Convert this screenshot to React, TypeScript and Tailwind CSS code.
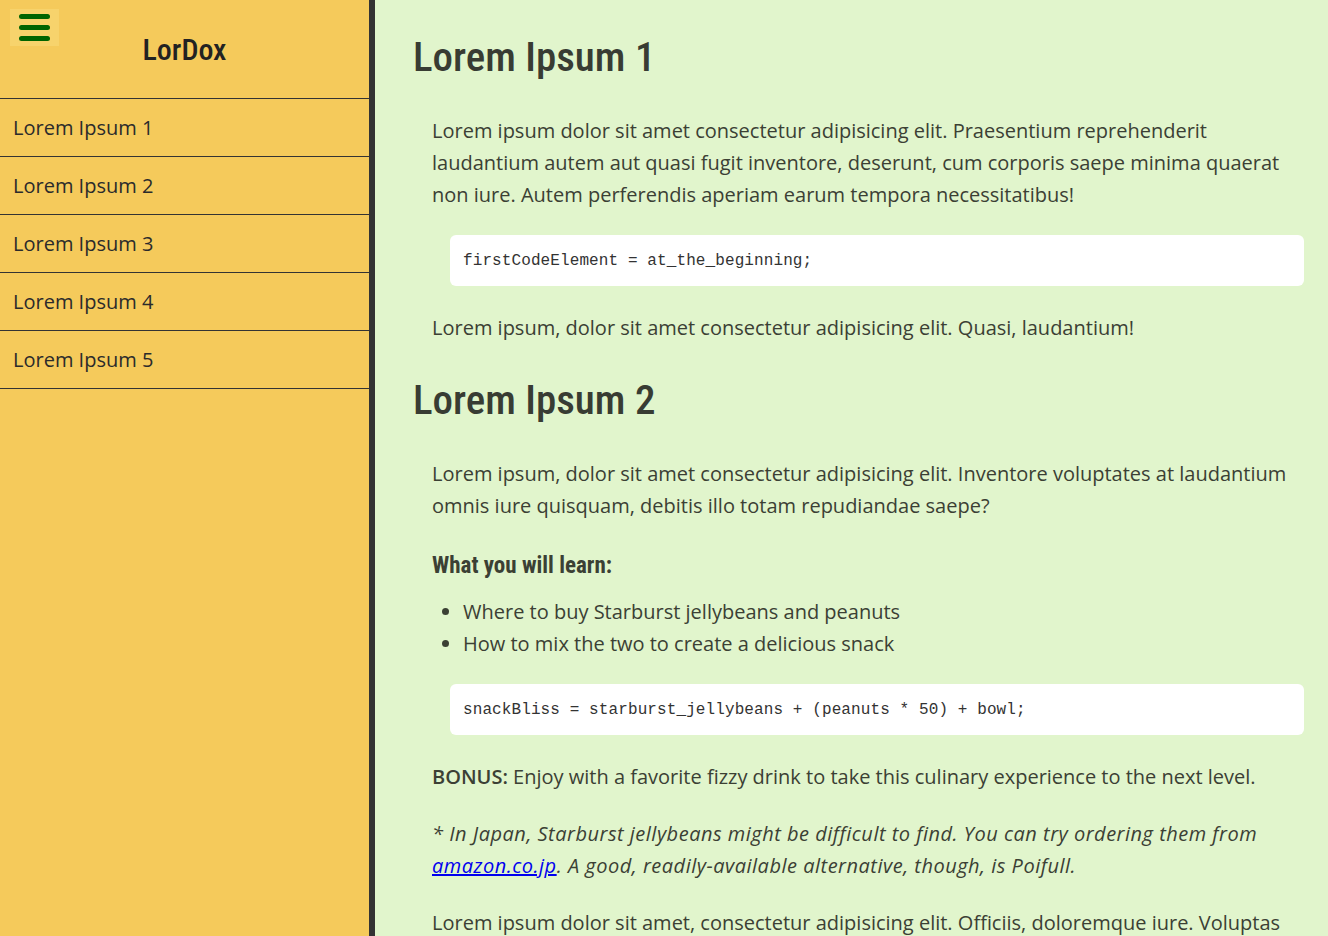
import type { JSX } from "react";

const navItems = ["Lorem Ipsum 1", "Lorem Ipsum 2", "Lorem Ipsum 3", "Lorem Ipsum 4", "Lorem Ipsum 5"];

const heading = "[font-family:'Roboto_Condensed',Roboto,sans-serif]";
const body = "[font-family:'Open_Sans',sans-serif]";

const CodeBlock = ({ code }: { code: string }): JSX.Element => (
  <pre className="ml-[36px] mt-[24px] mb-[26px] bg-white rounded-md px-[13px] h-[51px] flex items-center [font-family:'Liberation_Mono','Courier_New',monospace] text-[16px] tracking-[0.1px] text-[#333]">
    <code>{code}</code>
  </pre>
);

const Sidebar = (): JSX.Element => (
  <aside className="w-[375px] shrink-0 h-full bg-[#f5ca5b] border-r-[6px] border-[#333]">
    <div className="relative h-[99px] border-b border-[#333] flex items-center justify-center">
      <button className="absolute left-[10px] top-[9px] w-[49px] h-[37px] bg-[#f7d36c] flex flex-col items-center justify-center gap-[6px]">
        <span className="block w-[31px] h-[5px] rounded-full bg-[#006400]" />
        <span className="block w-[31px] h-[5px] rounded-full bg-[#006400]" />
        <span className="block w-[31px] h-[5px] rounded-full bg-[#006400]" />
      </button>
      <h1 className={`${heading} text-[30px] font-medium text-[#222]`}>LorDox</h1>
    </div>
    <nav>
      {navItems.map((item) => (
        <a
          key={item}
          className={`${body} block h-[58px] leading-[58px] border-b border-[#333] pl-[13px] text-[20px] text-[#2b2b2b]`}
        >
          {item}
        </a>
      ))}
    </nav>
  </aside>
);

export default function App(): JSX.Element {
  return (
    <div className="flex h-screen w-full overflow-hidden bg-[#e1f5cc]">
      <Sidebar />
      <main className={`${body} flex-1 pl-[39px] pr-[24px] pt-[33px] text-[20px] leading-[32px] text-[#3b4034] overflow-hidden`}>
        <h2 className={`${heading} -ml-px text-[41px] leading-[48px] font-medium text-[#383c33] mb-[34px]`}>
          Lorem Ipsum 1
        </h2>
        <p className="ml-[18px]">
          Lorem ipsum dolor sit amet consectetur adipisicing elit. Praesentium reprehenderit laudantium autem aut quasi
          fugit inventore, deserunt, cum corporis saepe minima quaerat non iure. Autem perferendis aperiam earum tempora
          necessitatibus!
        </p>
        <CodeBlock code="firstCodeElement = at_the_beginning;" />
        <p className="ml-[18px]">Lorem ipsum, dolor sit amet consectetur adipisicing elit. Quasi, laudantium!</p>

        <h2 className={`${heading} -ml-px text-[41px] leading-[48px] font-medium text-[#383c33] mt-[32px] mb-[34px]`}>
          Lorem Ipsum 2
        </h2>
        <p className="ml-[18px]">
          Lorem ipsum, dolor sit amet consectetur adipisicing elit. Inventore voluptates at laudantium omnis iure
          quisquam, debitis illo totam repudiandae saepe?
        </p>
        <h3 className={`${heading} ml-[18px] mt-[28px] mb-[14px] text-[23px] font-bold`}>What you will learn:</h3>
        <ul className="ml-[18px] pl-[31px] list-disc">
          <li>Where to buy Starburst jellybeans and peanuts</li>
          <li>How to mix the two to create a delicious snack</li>
        </ul>
        <CodeBlock code="snackBliss = starburst_jellybeans + (peanuts * 50) + bowl;" />
        <p className="ml-[18px]">
          <strong className="font-semibold">BONUS:</strong> Enjoy with a favorite fizzy drink to take this culinary
          experience to the next level.
        </p>
        <p className="ml-[18px] mt-[25px] italic tracking-[0.5px]">
          * In Japan, Starburst jellybeans might be difficult to find. You can try ordering them from{" "}
          <a className="text-[#0000ee] underline">amazon.co.jp</a>. A good, readily-available alternative, though, is
          Poifull.
        </p>
        <p className="ml-[18px] mt-[25px]">
          Lorem ipsum dolor sit amet, consectetur adipisicing elit. Officiis, doloremque iure. Voluptas quibusdam
          laboriosam, ipsa aliquid error nam aperiam dolorum.
        </p>
      </main>
    </div>
  );
}
